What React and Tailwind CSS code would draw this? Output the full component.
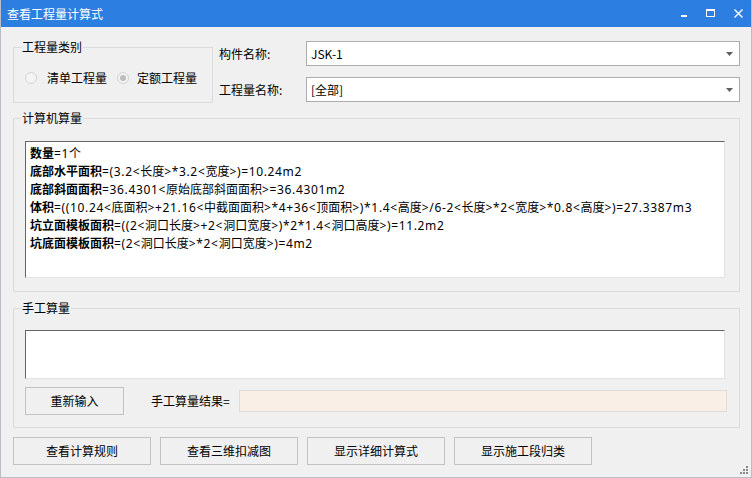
import React from 'react'

const FONT = "font-['Noto_Sans_CJK_SC','Microsoft_YaHei',sans-serif]"

const lines = [
  ['数量', '=1个'],
  ['底部水平面积', '=(3.2<长度>*3.2<宽度>)=10.24m2'],
  ['底部斜面面积', '=36.4301<原始底部斜面面积>=36.4301m2'],
  ['体积', '=((10.24<底面积>+21.16<中截面面积>*4+36<顶面积>)*1.4<高度>/6-2<长度>*2<宽度>*0.8<高度>)=27.3387m3'],
  ['坑立面模板面积', '=((2<洞口长度>+2<洞口宽度>)*2*1.4<洞口高度>)=11.2m2'],
  ['坑底面模板面积', '=(2<洞口长度>*2<洞口宽度>)=4m2'],
]

// latin runs get a bit of tracking so they match the wider ui font
const Formula = ({ text }) =>
  text.split(/([\u4e00-\u9fff]+)/).filter(Boolean).map((part, i) =>
    /[\u4e00-\u9fff]/.test(part)
      ? <span key={i}>{part}</span>
      : <span key={i} className="tracking-[0.65px]">{part}</span>
  )

const Combo = ({ value }) => (
  <div className="h-[25px] flex-1 flex items-center justify-between border border-[#acacac] bg-white pl-[4px] pr-[6px]">
    <span className="text-[12px] leading-[16px] text-black">{value}</span>
    <svg width="7" height="4" viewBox="0 0 7 4"><path d="M0 0h7L3.5 4z" fill="#606060" /></svg>
  </div>
)

const Radio = ({ checked }) => (
  <span className="w-[12px] h-[12px] rounded-full border border-[#d4d4d4] bg-[#f4f4f4] flex items-center justify-center">
    {checked && <span className="w-[6px] h-[6px] rounded-full bg-[#bdbdbd]" />}
  </span>
)

const Button = ({ children, className = '' }) => (
  <button className={`h-[28px] border border-[#c2c2c2] bg-[#f0f0f0] text-[12px] leading-[16px] text-black ${className}`}>
    {children}
  </button>
)

export default function App() {
  return (
    <div className={`${FONT} w-[752px] h-[478px] bg-[#f0f0f0] flex flex-col border-l border-r border-b border-[#b7bfc9] overflow-hidden`}>

      {/* title bar */}
      <div className="h-[27px] bg-[#2c7fe0] flex items-center justify-between pl-[7px] pr-[9px] -mx-px">
        <span className="text-[12px] leading-[16px] text-white">查看工程量计算式</span>
        <div className="flex items-center gap-[18px]">
          <svg width="8" height="8" viewBox="0 0 8 8"><rect x="1" y="5" width="6" height="2" fill="#fff" /></svg>
          <svg width="10" height="9" viewBox="0 0 10 9"><rect x="0.5" y="0.5" width="8" height="7" fill="none" stroke="#fff" /><rect x="0" y="0" width="9" height="2" fill="#fff" /></svg>
          <svg width="9" height="9" viewBox="0 0 9 9"><path d="M0.5 0.5l8 8M8.5 0.5l-8 8" stroke="#fff" strokeWidth="1.4" /></svg>
        </div>
      </div>

      <div className="pl-[12px] flex flex-col">

        {/* top row */}
        <div className="mt-[12px] flex">
          <fieldset className="w-[200px] h-[64px] border border-[#dadada] pl-[7px]">
            <legend className="px-[1px] text-[12px] leading-[16px] text-black">工程量类别</legend>
            <div className="flex items-center mt-[15px] pl-[4px] text-[12px] leading-[16px] text-black">
              <Radio />
              <span className="ml-[10px]">清单工程量</span>
              <span className="ml-[10px]"><Radio checked /></span>
              <span className="ml-[8px]">定额工程量</span>
            </div>
          </fieldset>

          <div className="w-[521px] ml-[6px] mt-[2px] flex flex-col gap-[11px] text-[12px] leading-[16px] text-black">
            <div className="flex items-center">
              <span className="w-[87px]">构件名称:</span>
              <Combo value="JSK-1" />
            </div>
            <div className="flex items-center">
              <span className="w-[87px]">工程量名称:</span>
              <Combo value="[全部]" />
            </div>
          </div>
        </div>

        {/* computed */}
        <fieldset className="mt-[7px] w-[727px] h-[182px] border border-[#dadada] pl-[7px] pr-[12px]">
          <legend className="px-[1px] text-[12px] leading-[16px] text-black">计算机算量</legend>
          <div className="mt-[15px] ml-[4px] w-[700px] h-[137px] bg-white border-t border-l border-t-[#646464] border-l-[#646464] border-r border-b border-r-[#e3e3e3] border-b-[#e3e3e3] pt-[3px] pl-[4px] font-['Noto_Sans','Noto_Sans_CJK_SC',sans-serif]">
            {lines.map(([k, v]) => (
              <div key={k} className="text-[12px] leading-[18px] text-black whitespace-nowrap">
                <span className="font-bold">{k}</span><Formula text={v} />
              </div>
            ))}
          </div>
        </fieldset>

        {/* manual */}
        <fieldset className="mt-[8px] w-[727px] h-[128px] border border-[#dadada] pl-[7px]">
          <legend className="px-[1px] text-[12px] leading-[16px] text-black">手工算量</legend>
          <div className="mt-[14px] ml-[4px] w-[700px] h-[49px] bg-white border-t border-l border-t-[#646464] border-l-[#646464] border-r border-b border-r-[#e3e3e3] border-b-[#e3e3e3]" />
          <div className="mt-[8px] ml-[4px] flex items-center">
            <Button className="w-[99px]">重新输入</Button>
            <span className="ml-[27px] text-[12px] leading-[16px] text-black">手工算量结果=</span>
            <div className="ml-auto mr-[12px] w-[488px] h-[22px] bg-[#f9efe6] border border-[#dcdcdc]" />
          </div>
        </fieldset>

        {/* bottom buttons */}
        <div className="mt-[9px] flex gap-[9px]">
          <Button className="w-[138px]">查看计算规则</Button>
          <Button className="w-[138px]">查看三维扣减图</Button>
          <Button className="w-[138px]">显示详细计算式</Button>
          <Button className="w-[138px]">显示施工段归类</Button>
        </div>
      </div>

      <div className="mt-auto flex justify-end pr-[3px] pb-[3px]">
        <svg width="8" height="8" viewBox="0 0 8 8" fill="#8a8a8a">
          <rect x="6" y="0" width="2" height="2" />
          <rect x="3" y="3" width="2" height="2" /><rect x="6" y="3" width="2" height="2" />
          <rect x="0" y="6" width="2" height="2" /><rect x="3" y="6" width="2" height="2" /><rect x="6" y="6" width="2" height="2" />
        </svg>
      </div>
    </div>
  )
}
